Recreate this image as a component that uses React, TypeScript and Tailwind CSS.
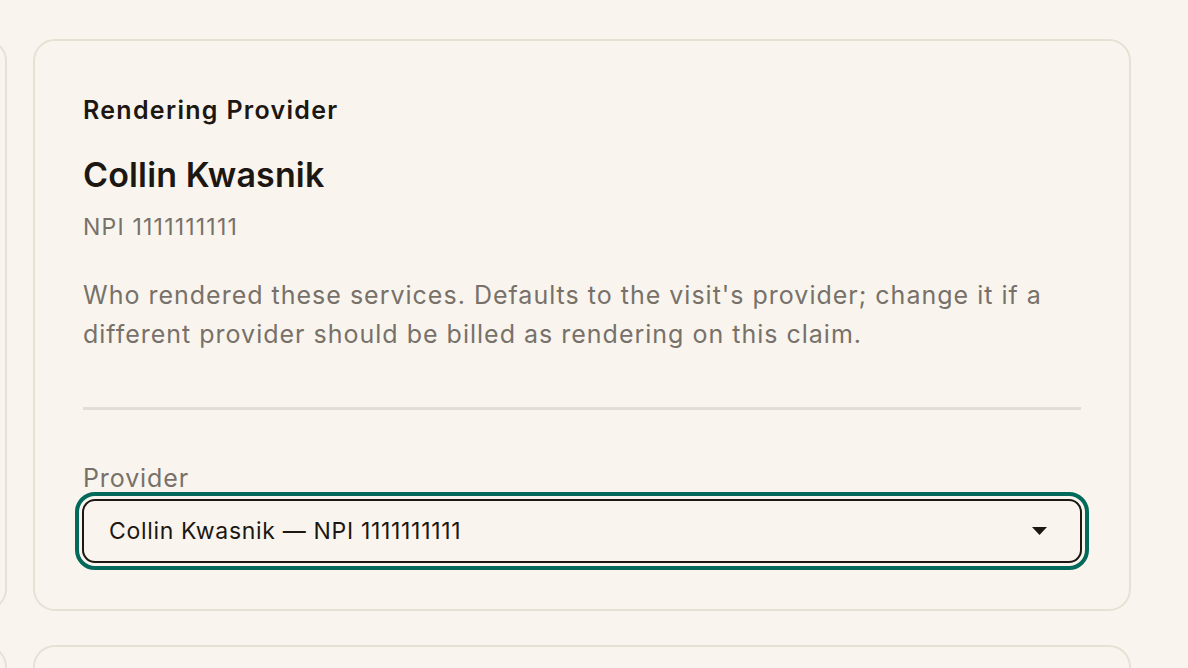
import React from 'react';

const font = { fontFamily: 'Inter, "Noto Sans", sans-serif' };

function EmptyCard({ tall }: { tall?: boolean }) {
  return (
    <div
      className={`rounded-[22px] border-2 border-[#e6e1d4] bg-[#f9f5ee] ${tall ? 'h-[572px]' : 'h-[220px]'}`}
    />
  );
}

function ProviderCard() {
  return (
    <div className="rounded-[22px] border-2 border-[#e6e1d4] bg-[#f9f5ee] px-[48px] pt-[51px] pb-[46px]">
      <h3 className="text-[25px] leading-[36px] font-semibold tracking-[1.3px] text-[#1c1712]">Rendering Provider</h3>
      <h2 className="mt-[25px] text-[34px] leading-[44px] font-semibold tracking-[0.15px] text-[#1c1712]">
        Collin Kwasnik
      </h2>
      <p className="mt-[14px] text-[23px] leading-[32px] tracking-[1.2px] text-[#77716a]">NPI 1111111111</p>
      <p className="mt-[33px] text-[25px] leading-[39px] tracking-[1px] text-[#77716a]">
        Who rendered these services. Defaults to the visit's provider; change it if a different provider
        should be billed as rendering on this claim.
      </p>
      <div className="mt-[53px] h-[3px] bg-[#e2ddd6]" />
      <label className="mt-[50px] block text-[25px] leading-[36px] tracking-[0.9px] text-[#77716a]">Provider</label>
      <div className="-mx-[1px] mt-[3px] flex h-[64px] items-center justify-between rounded-[13px] border-2 border-[#1c1712] bg-[#f9f5ee] pl-[25px] pr-[33px] outline-4 outline-offset-[3px] outline-[#03695b]">
        <span className="text-[23px] tracking-[0.68px] text-[#1c1712]">Collin Kwasnik — NPI 1111111111</span>
        <svg width="15" height="8" viewBox="0 0 15 8">
          <path d="M0 0 H15 L7.5 8 Z" fill="#1c1712" />
        </svg>
      </div>
    </div>
  );
}

export default function App() {
  return (
    <div className="h-[668px] w-[1188px] overflow-hidden bg-[#f9f5ee]" style={font}>
      <div className="-ml-[293px] grid grid-cols-[300px_1098px] gap-x-[26px] gap-y-[34px] pt-[39px]">
        <EmptyCard tall />
        <ProviderCard />
        <EmptyCard />
        <EmptyCard />
      </div>
    </div>
  );
}
